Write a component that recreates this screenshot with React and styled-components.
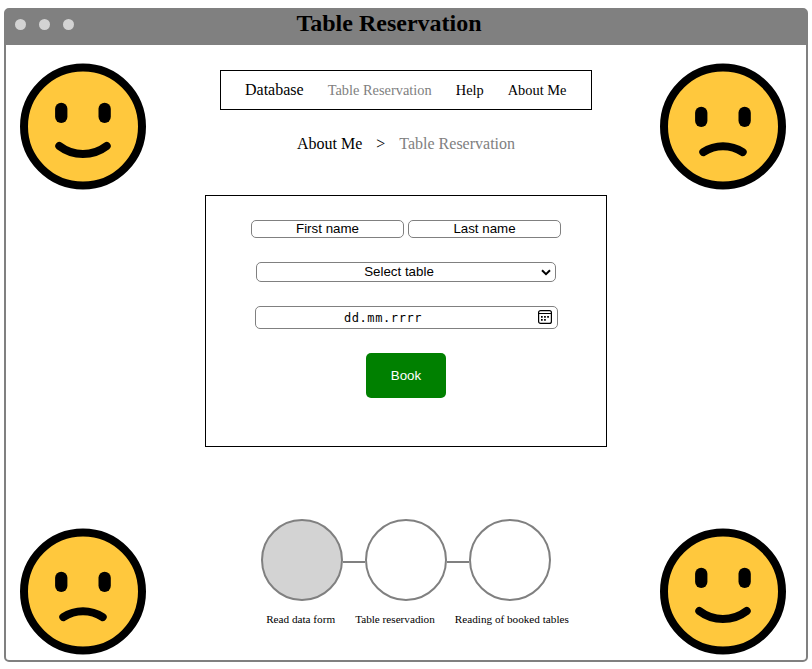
import React from 'react';
import styled, { createGlobalStyle } from 'styled-components';

const GlobalStyle = createGlobalStyle`
  * { box-sizing: border-box; }
  body { margin: 0; background: #fff; color: #000; font-family: 'Liberation Serif', 'Times New Roman', serif; font-size: 16px; }
`;

const Page = styled.div`
  padding: 8px 4px 7px;
  height: 669px;
`;

const Window = styled.div`
  display: flex;
  flex-direction: column;
  height: 654px;
  border: 2px solid gray;
  border-radius: 5px;
`;

const TitleBar = styled.header`
  display: grid;
  grid-template-columns: 100px 1fr 134px;
  height: 35px;
  flex: none;
  background: gray;
`;

const Dots = styled.div`
  display: flex;
  gap: 13px;
  padding: 9px 0 0 9px;
`;

const Dot = styled.span`
  width: 11px;
  height: 11px;
  border-radius: 50%;
  background: lightgray;
`;

const Title = styled.h1`
  margin: 0;
  font-size: 24px;
  line-height: 27px;
  text-align: center;
`;

const Content = styled.div`
  flex: 1;
  display: grid;
  grid-template-columns: 126px 402px 126px;
  justify-content: space-between;
  padding: 0 20px 0 14px;
`;

const Faces = styled.aside`
  display: flex;
  flex-direction: column;
  justify-content: space-between;
  padding: 18px 0 6px;
`;

const FaceSvg = styled.svg`
  display: block;
  width: 126px;
  height: 126px;
  overflow: visible;
`;

const Center = styled.main`
  display: flex;
  flex-direction: column;
  align-items: center;
  width: 402px;
  margin-left: 3px;
  padding-top: 25px;
`;

const Nav = styled.nav`
  display: flex;
  align-items: baseline;
  gap: 24px;
  width: 372px;
  height: 40px;
  padding: 0 24px;
  border: 1px solid #000;
  line-height: 38px;
  white-space: nowrap;
`;

const NavLink = styled.a`
  font-size: ${(p) => (p.$large ? '16px' : '14.4px')};
  color: ${(p) => (p.$current ? 'gray' : '#000')};
`;

const Breadcrumb = styled.div`
  display: flex;
  gap: 14px;
  margin-top: 24px;
  line-height: 20px;
`;

const Crumb = styled.span`
  color: ${(p) => (p.$current ? 'gray' : '#000')};
`;

const Form = styled.form`
  display: flex;
  flex-direction: column;
  align-items: center;
  width: 402px;
  height: 252px;
  margin-top: 41px;
  padding-top: 24px;
  border: 1px solid #000;
  font-family: 'Liberation Sans', Arial, sans-serif;
  font-size: 13.333px;
`;

const NameRow = styled.div`
  display: flex;
  gap: 4px;
`;

const Field = styled.div`
  display: grid;
  grid-template-columns: 1fr auto;
  align-items: center;
  width: ${(p) => p.$width}px;
  height: ${(p) => p.$height}px;
  margin-top: ${(p) => p.$top || 0}px;
  padding-right: ${(p) => p.$end || 0}px;
  border: 1px solid gray;
  border-radius: 5px;
  text-align: center;
`;

const FieldInput = styled.input`
  width: 100%;
  padding: 0 0 2px;
  border: 0;
  outline: 0;
  background: transparent;
  font: inherit;
  height: 16px;
  text-align: center;
  &::placeholder { color: #000; opacity: 1; }
`;

const FieldText = styled.span`
  line-height: 16px;
`;

const DateText = styled(FieldText)`
  padding: 1px 27px 0 0;
  font-family: 'DejaVu Sans Mono', monospace;
  font-size: 12px;
  letter-spacing: 0.6px;
`;

const BookButton = styled.button`
  width: 80px;
  height: 45px;
  margin-top: 24px;
  padding: 0;
  border: 0;
  border-radius: 5px;
  background: green;
  color: #fff;
  font: 13.333px 'Liberation Sans', Arial, sans-serif;
`;

const Steps = styled.div`
  display: flex;
  margin-top: 72px;
`;

const StepCircle = styled.div`
  width: 82px;
  height: 82px;
  border: 2px solid gray;
  border-radius: 50%;
  background: ${(p) => (p.$active ? 'lightgray' : '#fff')};
`;

const StepLine = styled.div`
  width: 22px;
  height: 2px;
  margin-top: 42px;
  background: gray;
`;

const StepLabels = styled.div`
  display: flex;
  gap: 20px;
  margin: 12px 0 0 23px;
  font-size: 11.2px;
  line-height: 13px;
  white-space: nowrap;
`;

const CalendarSvg = styled.svg`
  display: block;
  margin-bottom: 1px;
`;

const Face = ({ happy }) => (
  <FaceSvg viewBox="0 -0.5 126 126">
    <circle cx="63" cy="63" r="59" fill="#ffc83d" stroke="#000" strokeWidth="8" />
    <rect x="35.1" y={happy ? 39.2 : 43.2} width="12.3" height="20.3" rx="6.15" />
    <rect x="78.5" y={happy ? 39.2 : 43.2} width="12.3" height="20.3" rx="6.15" />
    <path
      d={happy ? 'M39.3 82.5A39 39 0 0 0 86.7 82.5' : 'M43.3 88.6A36 36 0 0 1 82.7 88.6'}
      fill="none"
      stroke="#000"
      strokeWidth="8"
      strokeLinecap="round"
    />
  </FaceSvg>
);

const Chevron = () => (
  <svg width="10" height="7" viewBox="0 0 10 7">
    <path d="M1 1.3L5 5.2L9 1.3" fill="none" stroke="#000" strokeWidth="2" />
  </svg>
);

const Calendar = () => (
  <CalendarSvg width="14" height="14" viewBox="0 0 14 14">
    <rect x="0.6" y="0.6" width="12.8" height="12.8" rx="2" fill="none" stroke="#000" strokeWidth="1.2" />
    <path d="M0.5 3.5H13.5" stroke="#000" />
    <path d="M3 6h1.7v1.7H3zM6.1 6h1.7v1.7H6.1zM9.2 6h1.7v1.7H9.2zM3 9h1.7v1.7H3zM6.1 9h1.7v1.7H6.1z" />
  </CalendarSvg>
);

export default function App() {
  return (
    <Page>
      <GlobalStyle />
      <Window>
        <TitleBar>
          <Dots>
            <Dot />
            <Dot />
            <Dot />
          </Dots>
          <Title>Table Reservation</Title>
        </TitleBar>
        <Content>
          <Faces>
            <Face happy />
            <Face />
          </Faces>
          <Center>
            <Nav>
              <NavLink $large>Database</NavLink>
              <NavLink $current>Table Reservation</NavLink>
              <NavLink>Help</NavLink>
              <NavLink>About Me</NavLink>
            </Nav>
            <Breadcrumb>
              <Crumb>About Me</Crumb>
              <Crumb>&gt;</Crumb>
              <Crumb $current>Table Reservation</Crumb>
            </Breadcrumb>
            <Form>
              <NameRow>
                <Field $width={153} $height={18}>
                  <FieldInput placeholder="First name" />
                </Field>
                <Field $width={153} $height={18}>
                  <FieldInput placeholder="Last name" />
                </Field>
              </NameRow>
              <Field $width={300} $height={20} $top={24} $end={4}>
                <FieldText>Select table</FieldText>
                <Chevron />
              </Field>
              <Field $width={303} $height={23} $top={24} $end={5}>
                <DateText>dd.mm.rrrr</DateText>
                <Calendar />
              </Field>
              <BookButton type="button">Book</BookButton>
            </Form>
            <Steps>
              <StepCircle $active />
              <StepLine />
              <StepCircle />
              <StepLine />
              <StepCircle />
            </Steps>
            <StepLabels>
              <span>Read data form</span>
              <span>Table reservadion</span>
              <span>Reading of booked tables</span>
            </StepLabels>
          </Center>
          <Faces>
            <Face />
            <Face happy />
          </Faces>
        </Content>
      </Window>
    </Page>
  );
}
